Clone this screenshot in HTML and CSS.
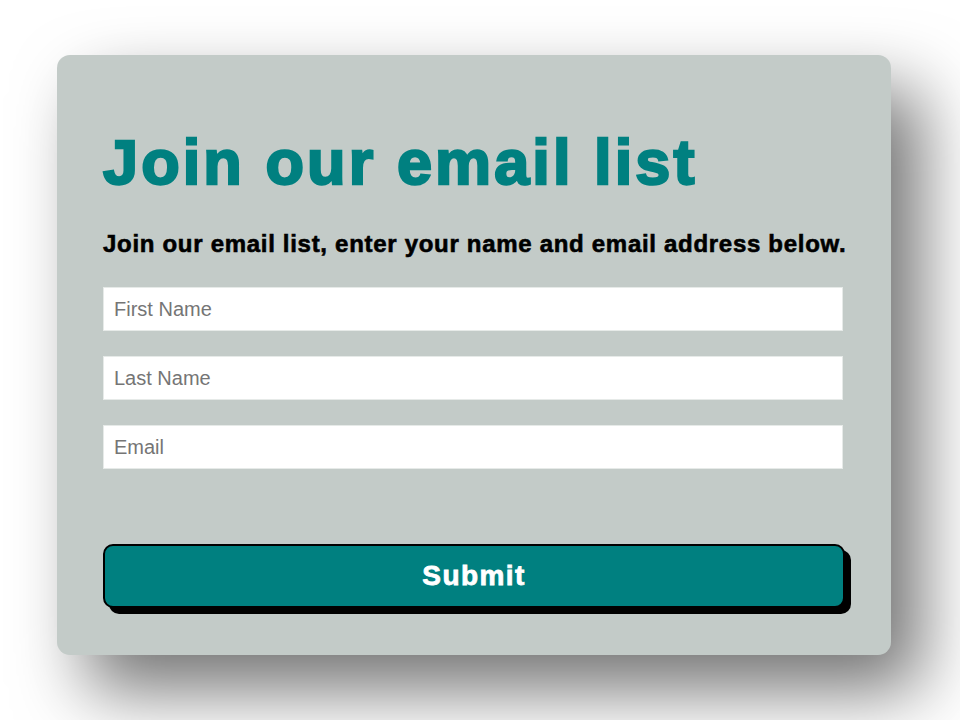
FILE: index.html
```html
<!DOCTYPE html>
<html lang="en">
<head>
<meta charset="utf-8">
<title>Join our email list</title>
<link rel="stylesheet" href="styles.css">
</head>
<body>
<form class="card">
  <h1 class="title">Join our email list</h1>
  <p class="lead">Join our email list, enter your name and email address below.</p>
  <div class="fields">
    <input class="field" type="text" placeholder="First Name">
    <input class="field" type="text" placeholder="Last Name">
    <input class="field" type="email" placeholder="Email">
  </div>
  <button class="submit" type="button">Submit</button>
</form>
</body>
</html>
```
FILE: styles.css
```css
html {
  margin: 0;
  padding: 0;
  min-height: 100%;
  background: #ffffff;
}
body {
  margin: 0;
  box-sizing: border-box;
  min-height: 720px;
  font-family: "Liberation Sans", Arial, sans-serif;
  padding: 55px 0 0 57px;
  overflow: hidden;
}
.card {
  box-sizing: border-box;
  width: 834px;
  height: 600px;
  background: #c3cbc8;
  border-radius: 13px;
  padding: 71px 46px 0 46px;
  box-shadow: 30px 35px 70px rgba(0, 0, 0, 0.55);
  display: flex;
  flex-direction: column;
}
.title {
  margin: 0;
  font-size: 63px;
  font-weight: 700;
  color: #008080;
  line-height: 73px;
  letter-spacing: 3.1px;
  -webkit-text-stroke: 2.4px #008080;
  white-space: nowrap;
}
.lead {
  margin: 31px 0 0 0;
  font-size: 24px;
  font-weight: 700;
  color: #000;
  letter-spacing: 0.7px;
  -webkit-text-stroke: 0.6px #000;
  white-space: nowrap;
}
.fields {
  margin-top: 29px;
  display: flex;
  flex-direction: column;
  gap: 25px;
}
.field {
  box-sizing: border-box;
  width: 740px;
  height: 44px;
  border: 1px solid #e6eae8;
  background: #fff;
  padding: 0 10px;
  font-family: "Liberation Sans", Arial, sans-serif;
  font-size: 20px;
  color: #333;
  outline: none;
}
.field::placeholder {
  color: #757575;
}
.submit {
  box-sizing: border-box;
  margin-top: 75px;
  width: 742px;
  height: 64px;
  background: #008080;
  color: #fff;
  border: 2px solid #000;
  border-radius: 10px;
  box-shadow: 6px 6px 0 #000;
  font-family: "Liberation Sans", Arial, sans-serif;
  font-size: 28px;
  font-weight: 700;
  letter-spacing: 1.4px;
  -webkit-text-stroke: 0.8px #fff;
  cursor: pointer;
}
```
